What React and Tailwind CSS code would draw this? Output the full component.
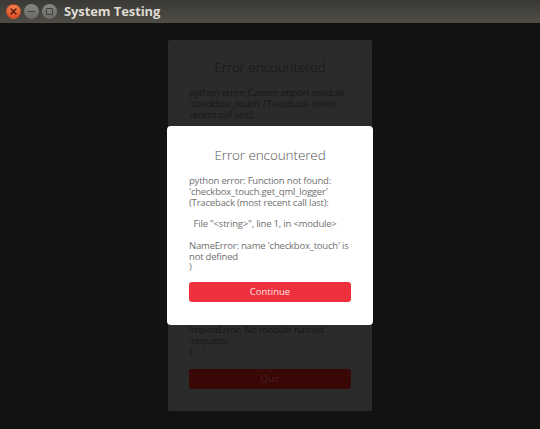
import React from "react";

export default function App() {
  const font = { fontFamily: '"Open Sans", "Noto Sans", sans-serif' };
  return (
    <div className="w-[540px] h-[429px] flex flex-col bg-[#121211] overflow-hidden" style={font}>
      <div className="h-[23px] flex items-center bg-gradient-to-b from-[#3a3935] to-[#4f4d46] pl-[6px]">
        <div className="w-[15px] h-[15px] rounded-full bg-gradient-to-b from-[#f4814f] to-[#df4c25] flex items-center justify-center border border-[#8a3518]/40">
          <svg width="7" height="7" viewBox="0 0 7 7"><path d="M1 1L6 6M6 1L1 6" stroke="#4a1a0c" strokeWidth="1.4" strokeLinecap="round" /></svg>
        </div>
        <div className="ml-[3px] w-[15px] h-[15px] rounded-full bg-gradient-to-b from-[#8a8883] to-[#6a6863] flex items-center justify-center">
          <div className="w-[7px] h-[1.5px] bg-[#3f3d39]" />
        </div>
        <div className="ml-[3px] w-[15px] h-[15px] rounded-full bg-gradient-to-b from-[#8a8883] to-[#6a6863] flex items-center justify-center">
          <div className="w-[7px] h-[7px] border-[1.4px] border-[#3f3d39] rounded-[1px]" />
        </div>
        <div className="ml-[7px] text-[13px] font-bold text-[#dfdbd2] leading-none tracking-[-0.1px]">System Testing</div>
      </div>
      <div className="relative flex-1">
        <div className="ml-[168px] mt-[17px] w-[204px] h-[371px] bg-[#2b2b2b] rounded-[2px] flex flex-col px-[21px] pb-[22px]">
          <div className="mt-[19px] text-center text-[13.5px] font-light text-[#151515] leading-[16px] tracking-[-0.1px]">Error encountered</div>
          <div className="mt-[12px] text-[9.5px] text-[#171717] leading-[11px] whitespace-pre tracking-[-0.2px]">{"python error: Cannot import module\n'checkbox_touch' (Traceback (most\nrecent call last):"}</div>
          <div className="flex-1" />
          <div className="text-[9.5px] text-[#171717] leading-[11px] whitespace-pre tracking-[-0.2px]">{"ImportError: No module named\n'requests'\n)"}</div>
          <div className="mt-[12px] h-[20px] rounded-[3px] bg-[#3a0707] flex items-center justify-center text-[9.5px] text-[#4a2020]">Quit</div>
        </div>
        <div className="absolute left-[167px] top-[103px] w-[206px] h-[199px] bg-white rounded-[4px] px-[22px] flex flex-col">
          <div className="mt-[21px] text-center text-[13.5px] font-light text-[#555555] leading-[16px] tracking-[-0.1px]">Error encountered</div>
          <div className="mt-[13px] text-[9.5px] text-[#707070] leading-[10.8px] whitespace-pre tracking-[-0.2px]">{"python error: Function not found:\n'checkbox_touch.get_qml_logger'\n(Traceback (most recent call last):\n\n  File \"<string>\", line 1, in <module>\n\nNameError: name 'checkbox_touch' is\nnot defined\n)"}</div>
          <div className="mt-[9px] h-[20px] rounded-[3px] bg-[#ee2f3c] flex items-center justify-center text-[9.5px] text-[#fde4e4]">Continue</div>
        </div>
      </div>
    </div>
  );
}
